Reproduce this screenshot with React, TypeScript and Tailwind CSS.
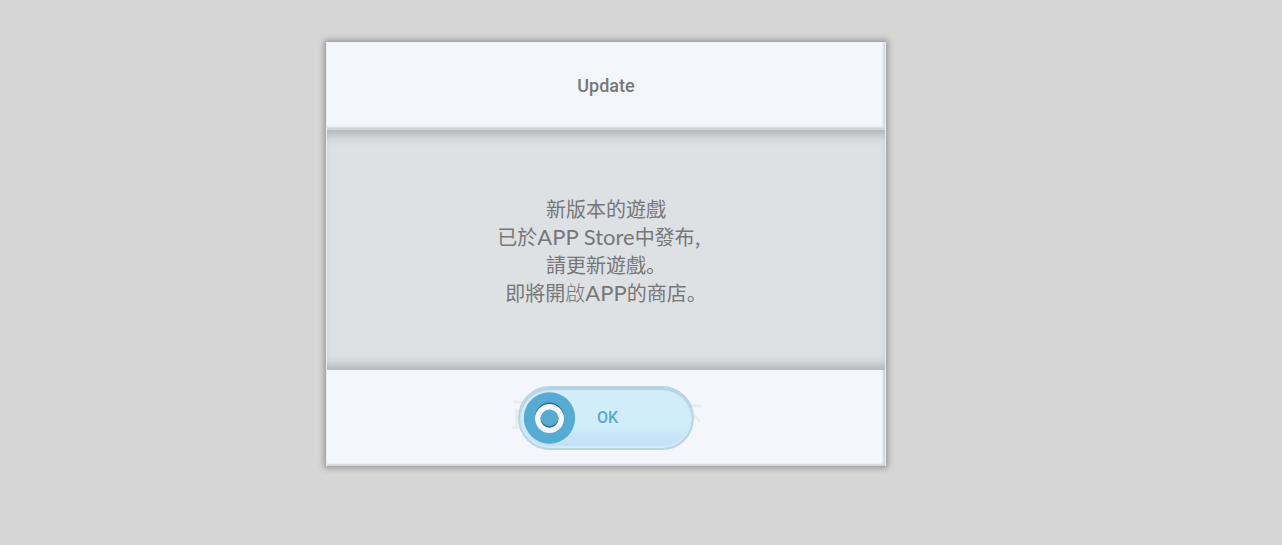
function RingIcon() {
  return (
    <svg viewBox="0 0 52 52" className="size-[52px]" aria-hidden="true">
      <circle cx="25.5" cy="26" r="25.7" fill="#55abd4" />
      <circle cx="25.5" cy="25.2" r="11.8" fill="none" stroke="#2f6b8a" strokeWidth="5.6" />
      <circle cx="25.5" cy="26.6" r="11.8" fill="none" stroke="#f5f7fa" strokeWidth="5.4" />
    </svg>
  );
}

// Faded strokes that peek out from behind the button
function GhostMark() {
  return (
    <svg viewBox="0 0 192 64" className="absolute top-0 -left-2 h-16 w-48" fill="none" stroke="#e9edf0" strokeWidth="3" aria-hidden="true">
      <path d="M3 16H20M6.500 23V41M2 41.500H20M178 20H191M181 26L190 36" />
    </svg>
  );
}

const LATIN = "font-['Lato',sans-serif] text-[22px] leading-none";

export default function App() {
  return (
    <div className="min-h-screen bg-[#d6d6d6] pt-[42px] pr-[70px]">
      <section
        role="dialog"
        aria-labelledby="dialog-title"
        className="mx-auto w-full max-w-[560px] border-x border-[#e9edf1] bg-[#f3f7fc] shadow-[0_0_6px_2px_rgba(0,0,0,0.3)]"
      >
        <header className="flex h-[88px] items-center justify-center border-b-2 border-[#d1d5d9] shadow-[inset_-2px_-1px_2px_#d5dae1]">
          <h1 id="dialog-title" className="font-['Roboto',sans-serif] text-[18px] font-medium text-[#777]">
            Update
          </h1>
        </header>

        <div className="flex h-60 items-center justify-center bg-[#dde1e4] pt-0.5 shadow-[inset_0_12px_12px_-8px_#a9adaf,inset_0_-12px_12px_-8px_#a9adaf]">
          <p className="text-center font-['Noto_Sans_CJK_SC',sans-serif] text-[20px] leading-7 text-[#777]">
            新版本的遊戲
            <br />
            已於<span className={LATIN}>APP Store</span>中發布<span className="inline-block w-5 text-left">,</span>
            <br />
            請更新遊戲。
            <br />
            即將開<span className="font-light">啟</span><span className={LATIN}>APP</span>的商店。
          </p>
        </div>

        <footer className="flex h-24 items-center justify-center shadow-[inset_-2px_-2px_2px_#cfd4dc]">
          <div className="relative">
            <GhostMark />
            <button
              type="button"
              className="relative flex h-16 w-44 items-center gap-[21px] rounded-full border-2 border-[#b9d5e5] bg-linear-to-b from-[#d0edf9] from-60% to-[#c0dff3] pl-1 shadow-[inset_0_2px_1px_#b4cfdf,inset_0_-2px_1px_#d0edf9]"
            >
              <RingIcon />
              <span className="font-['Roboto',sans-serif] text-[16px] font-medium text-[#55abd4]">OK</span>
            </button>
          </div>
        </footer>
      </section>
    </div>
  );
}
